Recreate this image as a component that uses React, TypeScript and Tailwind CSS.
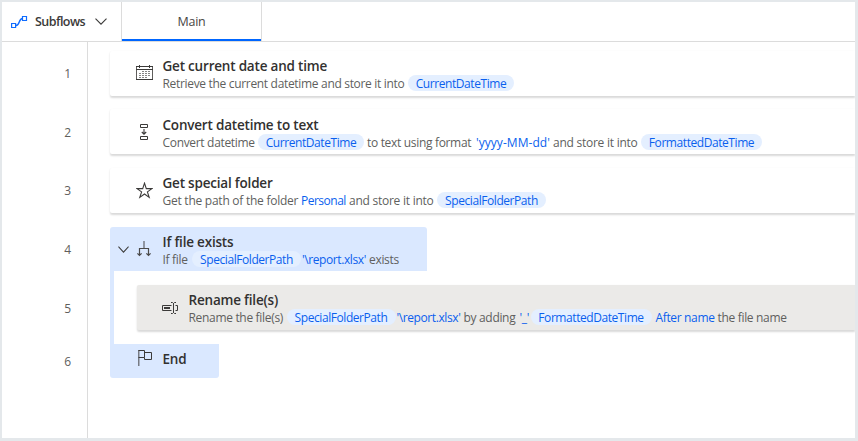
import type { ReactNode } from "react";

function Txt({ w, children, blue = false, t = "tracking-[-0.32px]" }: { w: string; children: ReactNode; blue?: boolean; t?: string }) {
  return (
    <span className={`shrink-0 whitespace-nowrap pt-[2px] ${w} ${t} ${blue ? "text-[#0a5fee]" : "text-[#605f5e]"}`}>{children}</span>
  );
}

function Pill({ w, children, t = "tracking-[-0.43px]" }: { w: string; children: ReactNode; t?: string }) {
  return (
    <span className={`flex h-4 shrink-0 items-center justify-center whitespace-nowrap rounded-full bg-[#e4efff] pt-[2px] text-[#0a5fee] ${w} ${t}`}>
      {children}
    </span>
  );
}

function Title({ children, t = "tracking-[-0.2px]" }: { children: ReactNode; t?: string }) {
  return <div className={`h-[18px] whitespace-nowrap text-[13.5px] leading-[18px] font-semibold text-[#323130] ${t}`}>{children}</div>;
}

function Desc({ children }: { children: ReactNode }) {
  return <div className="flex h-4 items-center text-[12px] leading-4">{children}</div>;
}

const card = "flex h-[45px] rounded-l-[2px] shadow-[0_1.5px_2px_rgba(0,0,0,0.15)]";

function CalendarIcon() {
  return (
    <svg width="17" height="16" viewBox="0 0 17 16" fill="none" stroke="#3b3a39" shapeRendering="crispEdges">
      <path d="M.5 2v12.5h16V2" stroke="#605e5c" />
      <path d="M0 1.5h17M0 4.5h17M0 14.5h17M3.5 0v3M13.5 0v3" />
      <path d="M6 6.5h8M3 8.5h11M3 10.5h11M3 12.5h8" stroke="#858585" strokeDasharray="2 1" />
    </svg>
  );
}

function ConvertIcon() {
  return (
    <svg width="8" height="17" viewBox="0 0 8 17" fill="none" stroke="#3b3a39">
      <path d="M.5 1.5h7v3h-7zM.5 13.5h7v3h-7z" />
      <path d="M4 6v5.5M1.8 9 4 11.2 6.2 9" strokeWidth="1.1" />
    </svg>
  );
}

function StarIcon() {
  return (
    <svg width="17" height="17" viewBox="0 0 17 17" fill="none" stroke="#3b3a39" strokeWidth="1.1">
      <path d="m8.5 1.2 1.8 5.4H16l-4.6 3.3 1.8 5.5-4.7-3.4-4.7 3.4 1.8-5.5L1 6.6h5.7z" />
    </svg>
  );
}

function BranchIcon() {
  return (
    <svg width="14" height="16" viewBox="0 0 14 16" fill="none" stroke="#4b4a4a">
      <path d="M7 0v7.5" stroke="#777b84" strokeWidth="1.5" />
      <path d="M2.5 14.5v-7h9v7M.4 12.3l2.1 2.2 2.1-2.2M9.4 12.3l2.1 2.2 2.1-2.2" strokeWidth="1.2" />
    </svg>
  );
}

function RenameIcon() {
  return (
    <svg width="17" height="14" viewBox="0 0 17 14" fill="none" stroke="#3b3a39">
      <path d="M9.5 4.5h-9v5h9M13.5 4.5h2v5h-2M11.5 2v10M9 1.5h1.5l1 1 1-1H14M9 12.5h1.5l1-1 1 1H14" />
      <path d="M2 7h6" strokeWidth="2" />
    </svg>
  );
}

function FlagIcon() {
  return (
    <svg width="15" height="17" viewBox="0 0 15 17" fill="none" stroke="#3b3a39">
      <path d="M.75 0v16" stroke="#777b84" strokeWidth="1.5" />
      <path d="M.5.5h6v7h-6M6.5 2.5h7v7h-7v-2" />
    </svg>
  );
}

function Chevron({ w, h }: { w: number; h: number }) {
  return (
    <svg width={w} height={h} viewBox="0 0 12 7" preserveAspectRatio="none" fill="none" stroke="#3b3a39" strokeWidth="1.1">
      <path d="m.5.7 5.5 5.5L11.5.7" />
    </svg>
  );
}

const numbers = [
  { n: 1, pos: "mt-[22px]" },
  { n: 2, pos: "mt-[39px]" },
  { n: 3, pos: "mt-[38px]" },
  { n: 4, pos: "mt-[39px]" },
  { n: 5, pos: "mt-[39px]" },
  { n: 6, pos: "mt-[33px]" },
];

export default function App() {
  return (
    <div className="h-[441px] w-[858px] overflow-hidden border-2 border-r-[3px] border-b-[3px] border-[#e4e8eb] bg-white font-['Open_Sans','Noto_Sans',sans-serif]">
      <header className="flex h-10 border-b border-[#dcdcdc]">
        <div className="flex w-[120px] items-center border-r border-[#dcdcdc] pl-[9px]">
          <svg width="17" height="14" viewBox="0 0 17 14" fill="none" stroke="#0f6cff" strokeWidth="1.2">
            <path d="M.6 8.5h4v4h-4zM11.5 1.5h4v4h-4z" />
            <path d="M5 10.5c4 0 2.5-7 6.5-7" strokeWidth="1.4" />
          </svg>
          <span className="ml-[7px] w-[60px] whitespace-nowrap pt-px text-[12.5px] leading-5 font-semibold tracking-[-0.55px] text-[#3b3a39]">Subflows</span>
          <Chevron w={12} h={7} />
        </div>
        <div className="flex w-[139px] items-center justify-center border-b-2 border-[#0066ff] pt-[3px] text-[12.5px] tracking-[-0.3px] text-[#484644]">Main</div>
        <div className="w-px bg-[#dcdcdc]" />
      </header>

      <div className="flex h-[396px]">
        <div className="flex w-[86px] flex-col items-end border-r border-[#dcdcdc] pr-4">
          {numbers.map(({ n, pos }) => (
            <span key={n} className={`h-5 text-[12px] leading-5 text-[#605e5c] ${pos}`}>{n}</span>
          ))}
        </div>

        <main className="flex min-w-0 flex-1 flex-col pt-[9px] pl-[22px]">
          <section className={card}>
            <div className="w-[52.5px] pt-[14px] pl-[26px]"><CalendarIcon /></div>
            <div className="pt-[6px]">
              <Title>Get current date and time</Title>
              <Desc>
                <Txt w="w-[245.5px]">Retrieve the current datetime and store it into</Txt>
                <Pill w="w-[106px]">CurrentDateTime</Pill>
              </Desc>
            </div>
          </section>

          <section className={`mt-[13px] ${card}`}>
            <div className="w-[52.5px] pt-[14px] pl-[30px]"><ConvertIcon /></div>
            <div className="pt-[7px]">
              <Title>Convert datetime to text</Title>
              <Desc>
                <Txt w="w-[95.5px]">Convert datetime</Txt>
                <Pill w="w-[106px]">CurrentDateTime</Pill>
                <Txt w="w-[112px] pl-[3px]">to text using format</Txt>
                <Txt w="w-[77px]" t="tracking-[0.05px]" blue>'yyyy-MM-dd'</Txt>
                <Txt w="w-[88px]" t="tracking-[-0.25px]">and store it into</Txt>
                <Pill w="w-[121px]">FormattedDateTime</Pill>
              </Desc>
            </div>
          </section>

          <section className={`mt-[14px] ${card}`}>
            <div className="w-[52.5px] pt-[14px] pl-[26px]"><StarIcon /></div>
            <div className="pt-[6px]">
              <Title>Get special folder</Title>
              <Desc>
                <Txt w="w-[138.5px]" t="tracking-[-0.25px]">Get the path of the folder</Txt>
                <Txt w="w-[48px]" t="tracking-[-0.5px]" blue>Personal</Txt>
                <Txt w="w-[88px]" t="tracking-[-0.25px]">and store it into</Txt>
                <Pill w="w-[109px]">SpecialFolderPath</Pill>
              </Desc>
            </div>
          </section>

          <section className="mt-[14px] flex h-[44px] w-[317px] rounded-t-[3px] bg-[#dae8ff]">
            <div className="flex w-[52.5px] pl-[8px]">
              <div className="w-[19px] pt-[19px]"><Chevron w={11} h={7} /></div>
              <div className="pt-[14px]"><BranchIcon /></div>
            </div>
            <div className="pt-[6px]">
              <Title>If file exists</Title>
              <Desc>
                <Txt w="w-[29.5px]">If file</Txt>
                <Pill w="w-[109px]">SpecialFolderPath</Pill>
                <Txt w="w-[68px] pl-px" t="tracking-[-0.4px]" blue>'\report.xlsx'</Txt>
                <Txt w="w-[34px]">exists</Txt>
              </Desc>
            </div>
          </section>

          <div className="h-[73px] border-l-4 border-[#dae8ff] pt-[14px] pl-[23px]">
            <section className={`${card} bg-[#ebeae8]`}>
              <div className="w-[51.5px] pt-[16px] pl-[25px]"><RenameIcon /></div>
              <div className="pt-[6px]">
                <Title>Rename file(s)</Title>
                <Desc>
                  <Txt w="w-[98px]">Rename the file(s)</Txt>
                  <Pill w="w-[109px]">SpecialFolderPath</Pill>
                  <Txt w="w-[68px] pl-px" t="tracking-[-0.4px]" blue>'\report.xlsx'</Txt>
                  <Txt w="w-[56px]">by adding</Txt>
                  <Txt w="w-[11px]" blue>'_'</Txt>
                  <Pill w="w-[121px]">FormattedDateTime</Pill>
                  <Txt w="w-[66px] pl-1" t="tracking-[-0.35px]" blue>After name</Txt>
                  <Txt w="w-[72px]">the file name</Txt>
                </Desc>
              </div>
            </section>
          </div>

          <section className="flex h-[34px] w-[109px] rounded-b-[3px] bg-[#dae8ff]">
            <div className="w-[52.5px] pt-[6px] pl-[28px]"><FlagIcon /></div>
            <div className="pt-[6px]"><Title>End</Title></div>
          </section>
        </main>
      </div>
    </div>
  );
}
